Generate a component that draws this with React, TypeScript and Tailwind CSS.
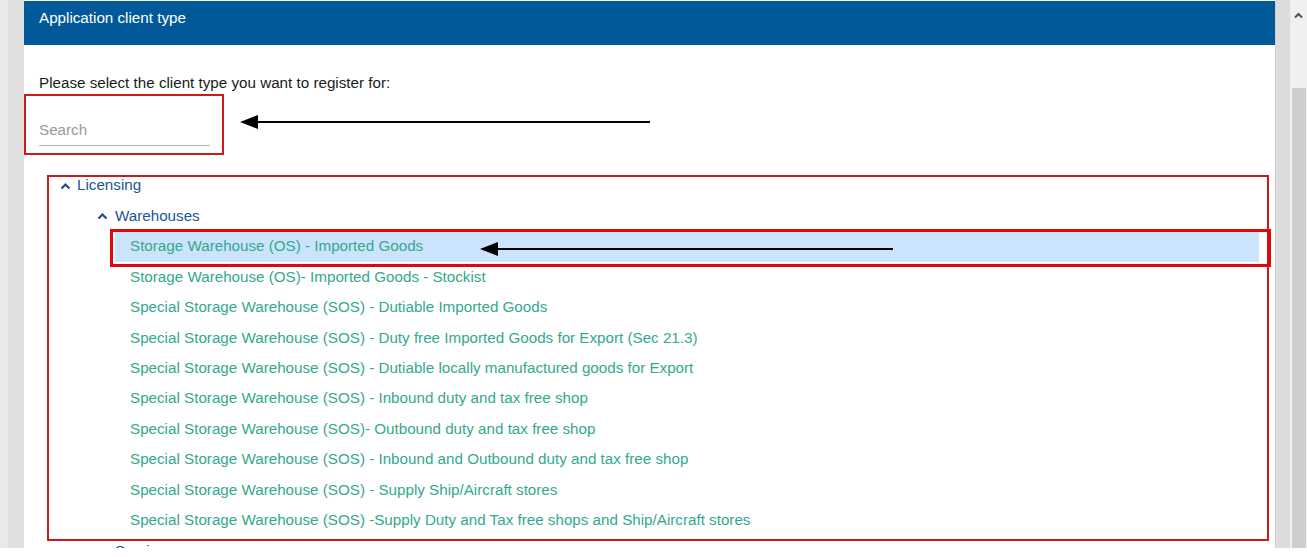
import React from "react";

const items = [
  "Storage Warehouse (OS) - Imported Goods",
  "Storage Warehouse (OS)- Imported Goods - Stockist",
  "Special Storage Warehouse (SOS) - Dutiable Imported Goods",
  "Special Storage Warehouse (SOS) - Duty free Imported Goods for Export (Sec 21.3)",
  "Special Storage Warehouse (SOS) - Dutiable locally manufactured goods for Export",
  "Special Storage Warehouse (SOS) - Inbound duty and tax free shop",
  "Special Storage Warehouse (SOS)- Outbound duty and tax free shop",
  "Special Storage Warehouse (SOS) - Inbound and Outbound duty and tax free shop",
  "Special Storage Warehouse (SOS) - Supply Ship/Aircraft stores",
  "Special Storage Warehouse (SOS) -Supply Duty and Tax free shops and Ship/Aircraft stores",
];

function Chevron() {
  return (
    <svg width="11" height="8" viewBox="0 0 11 8" className="shrink-0">
      <path d="M1.5 6.5 L5.5 2.5 L9.5 6.5" fill="none" stroke="#1d4f86" strokeWidth="2.2" />
    </svg>
  );
}

function Arrow({ length }: { length: number }) {
  return (
    <svg width={length} height="16" viewBox={`0 0 ${length} 16`}>
      <line x1="14" y1="8" x2={length} y2="8" stroke="#000" strokeWidth="2" />
      <polygon points="0,8 18,1 18,15" fill="#000" />
    </svg>
  );
}

export default function App() {
  return (
    <div className="bg-white w-[1307px] h-[557px] overflow-hidden" style={{ fontFamily: '"Liberation Sans", Arial, sans-serif' }}>
      <div className="flex h-[548px] overflow-hidden">
        {/* left gutter */}
        <div className="w-[24px] shrink-0 flex">
          <div className="w-[8px] bg-[#e9e9e9]" />
          <div className="flex-1 bg-[#e0e0e0]" />
        </div>

        {/* main panel */}
        <div className="w-[1251px] shrink-0 relative flex flex-col bg-white">
          <div className="h-[44px] shrink-0 mt-[1px] bg-[#02599a] flex items-center pl-[15px] pb-[10px]">
            <span className="text-white text-[15.2px]">Application client type</span>
          </div>

          <div className="pl-[15px] shrink-0">
            <div className="mt-[29px] text-[15.2px] leading-[17px] text-[#1a1a1a]">
              Please select the client type you want to register for:
            </div>
            <div className="mt-[30px] w-[171px] border-b border-[#b5b5b5] pb-[7px]">
              <div className="text-[15.2px] leading-[17px] text-[#9a9a9a]">Search</div>
            </div>
          </div>

          {/* tree */}
          <div className="mt-[24.6px] pl-[36px] pr-[16px] shrink-0">
            <div className="h-[30.45px] flex items-center gap-[6px]">
              <Chevron />
              <span className="text-[15.2px] text-[#1d5592]">Licensing</span>
            </div>
            <div className="pl-[37px]">
              <div className="h-[30.45px] flex items-center gap-[7px]">
                <Chevron />
                <span className="text-[15.2px] text-[#1d5592]">Warehouses</span>
              </div>
              <div className="pl-[18px]">
                {items.map((t, i) => (
                  <div
                    key={i}
                    className={
                      i === 0
                        ? "h-[30.45px] flex items-center pl-[15px] bg-[#cce4fb]"
                        : "h-[30.45px] flex items-center pl-[15px]"
                    }
                  >
                    <span className="text-[15.2px] text-[#33a98e] whitespace-nowrap">{t}</span>
                  </div>
                ))}
              </div>
              <div className="h-[30.45px] flex items-center pl-[18px]">
                <span className="text-[15.2px] text-[#1d5592]">Services</span>
              </div>
            </div>
          </div>

          {/* annotation overlays */}
          <div className="absolute left-0 top-[94px] w-[200px] h-[61px] border-2 border-[#cc1a1a]" />
          <div className="absolute left-[216px] top-[114px]">
            <Arrow length={410} />
          </div>
          <div className="absolute left-[23px] top-[175px] w-[1222px] h-[366px] border-2 border-[#cc1a1a]" />
          <div className="absolute left-[86px] top-[229px] w-[1161px] h-[38px] border-[3px] border-[#dd0a0a]" />
          <div className="absolute left-[456px] top-[241px]">
            <Arrow length={413} />
          </div>
        </div>

        {/* right gutter */}
        <div className="w-[15px] shrink-0 bg-[#dcdcdc] border-l border-[#cfcfcf]" />

        {/* scrollbar */}
        <div className="w-[17px] shrink-0 bg-[#f0f0f0] flex flex-col items-center">
          <div className="h-[88px] w-full flex justify-center pt-[12px]">
            <svg width="9" height="7" viewBox="0 0 9 7">
              <path d="M1 5.5 L4.5 2 L8 5.5" fill="none" stroke="#505050" strokeWidth="2" />
            </svg>
          </div>
          <div className="flex-1 w-[14px] bg-[#cdcdcd]" />
        </div>
      </div>
    </div>
  );
}
